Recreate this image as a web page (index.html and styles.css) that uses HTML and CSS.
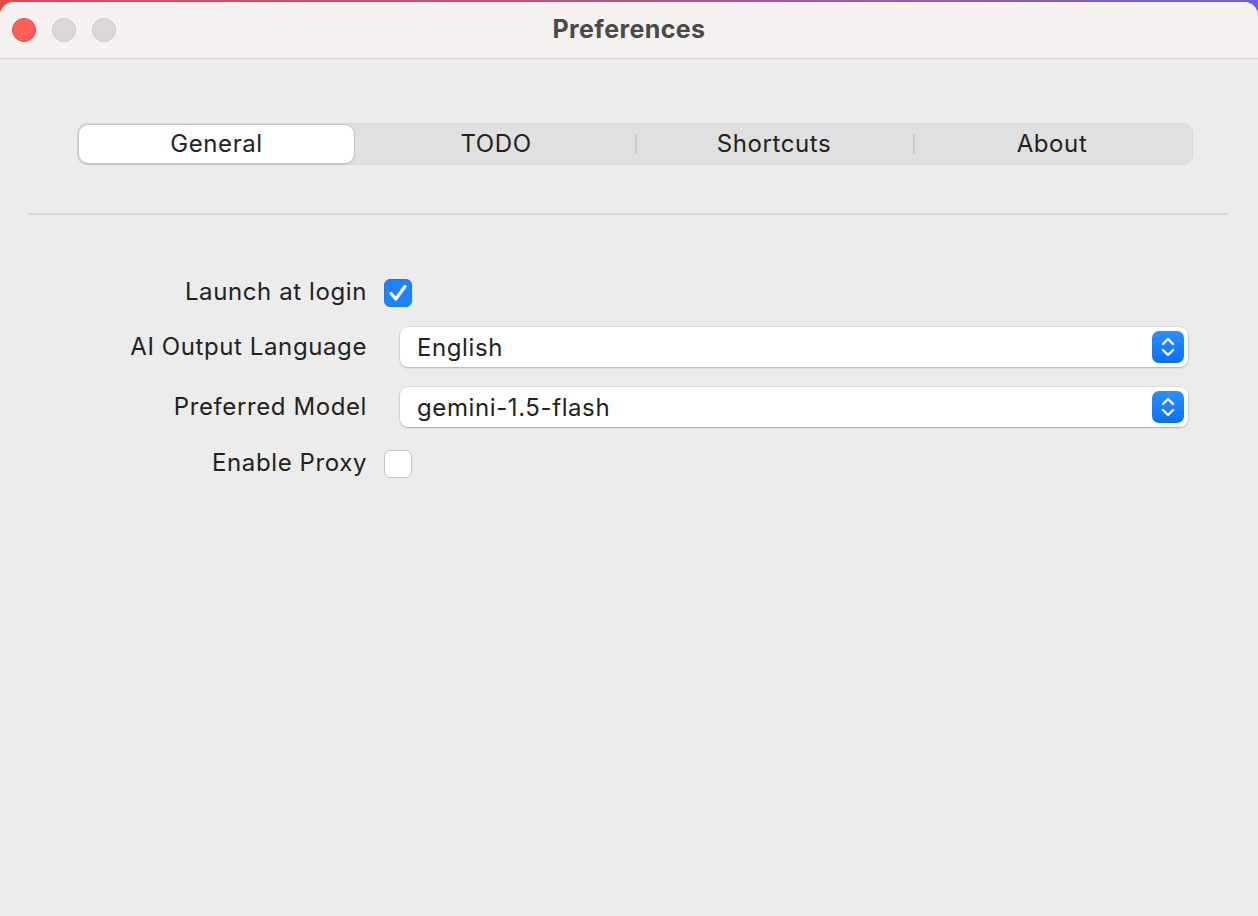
FILE: index.html
```html
<!DOCTYPE html>
<html lang="en">
<head>
    <meta charset="UTF-8">
    <title>Preferences</title>
    <link rel="stylesheet" href="styles.css">
</head>
<body>
    <div class="window">
        <div class="titlebar">
            <div class="lights">
                <span class="light close"></span>
                <span class="light"></span>
                <span class="light"></span>
            </div>
            <div class="title">Preferences</div>
        </div>

        <div class="content">
            <div class="tabs">
                <div class="tab active">General</div>
                <div class="tab">TODO</div>
                <div class="tab sep">Shortcuts</div>
                <div class="tab sep">About</div>
            </div>

            <div class="divider"></div>

            <div class="form">
                <label class="label check-label">Launch at login</label>
                <div class="field">
                    <span class="checkbox checked">
                        <svg width="22" height="22" viewBox="0 0 22 22"><path d="M4 11.5 L8.8 17 L18 4.5" fill="none" stroke="#fff" stroke-width="3.2" stroke-linecap="round" stroke-linejoin="round"/></svg>
                    </span>
                </div>

                <label class="label">AI Output Language</label>
                <div class="field">
                    <div class="select">
                        <span>English</span>
                        <span class="stepper">
                            <svg width="16" height="24" viewBox="0 0 16 24"><path d="M3 9 L8 4 L13 9 M3 15 L8 20 L13 15" fill="none" stroke="#fff" stroke-width="2.4" stroke-linecap="round" stroke-linejoin="round"/></svg>
                        </span>
                    </div>
                </div>

                <label class="label">Preferred Model</label>
                <div class="field">
                    <div class="select">
                        <span>gemini-1.5-flash</span>
                        <span class="stepper">
                            <svg width="16" height="24" viewBox="0 0 16 24"><path d="M3 9 L8 4 L13 9 M3 15 L8 20 L13 15" fill="none" stroke="#fff" stroke-width="2.4" stroke-linecap="round" stroke-linejoin="round"/></svg>
                        </span>
                    </div>
                </div>

                <label class="label check-label proxy">Enable Proxy</label>
                <div class="field proxy">
                    <span class="checkbox"></span>
                </div>
            </div>
        </div>
    </div>
</body>
</html>
```

FILE: styles.css
```css
html, body {
    margin: 0;
    height: 100%;
}

body {
    font-family: 'Inter', 'Liberation Sans', sans-serif;
    background: linear-gradient(to right, #e4464c, #c0528a 50%, #6d5ee8);
    color: #222;
    overflow: hidden;
}

.window {
    margin-top: 2px;
    height: calc(100% - 2px);
    background: #ececec;
    border-radius: 14px 14px 0 0;
    overflow: hidden;
    display: flex;
    flex-direction: column;
}

.titlebar {
    height: 56px;
    background: #f5f1f0;
    border-bottom: 1px solid #cfcccb;
    display: flex;
    align-items: center;
    position: relative;
}

.lights {
    display: flex;
    gap: 16px;
    padding-left: 12px;
}

.light {
    width: 22px;
    height: 22px;
    border-radius: 50%;
    background: #dcd8d7;
    border: 1px solid #c9c5c4;
}

.light.close {
    background: #fe5f57;
    border-color: #e9463f;
}

.title {
    position: absolute;
    left: 0;
    right: 0;
    top: 12px;
    text-align: center;
    font-size: 25px;
    font-weight: 700;
    letter-spacing: 0.4px;
    color: #4a4a4a;
    pointer-events: none;
}

.content {
    flex: 1;
    padding-top: 64px;
}

.tabs {
    margin: 0 65px 0 77px;
    height: 42px;
    background: #e0e0e0;
    border: 1px solid #d8d8d8;
    border-radius: 10px;
    box-sizing: border-box;
    display: flex;
    padding: 1px;
}

.tab {
    flex: 1;
    display: flex;
    align-items: center;
    justify-content: center;
    padding-bottom: 2px;
    font-size: 24px;
    letter-spacing: 0.6px;
    color: #222;
    position: relative;
}

.tab.active {
    flex: 0 0 275px;
    margin-right: 3px;
    background: #fff;
    border-radius: 9px;
    box-shadow: 0 0 0 1px #c4c4c4, 0 1px 2px rgba(0, 0, 0, 0.25);
}

.tab.sep::before {
    content: '';
    position: absolute;
    left: 0;
    top: 9px;
    bottom: 9px;
    width: 2px;
    background: #cbcbcb;
}

.divider {
    height: 2px;
    background: #d6d6d6;
    margin: 48px 30px 0 28px;
}

.form {
    display: grid;
    grid-template-columns: 367px 1fr;
    column-gap: 17px;
    row-gap: 20px;
    padding: 64px 70px 0 0;
    align-items: center;
}

.label {
    text-align: right;
    line-height: 28px;
    font-size: 24px;
    letter-spacing: 0.6px;
    color: #222;
}

.check-label {
    line-height: 25px;
    padding-bottom: 3px;
}

.field {
    display: flex;
    align-items: center;
}

.proxy {
    margin-top: 3px;
}

.checkbox {
    width: 28px;
    height: 28px;
    box-sizing: border-box;
    border-radius: 6px;
    background: #fff;
    border: 1px solid #c6c6c6;
    display: flex;
    align-items: center;
    justify-content: center;
}

.checkbox.checked {
    background: #1e83fb;
    border-color: #1a78ea;
}

.select {
    flex: 1;
    margin-left: 16px;
    height: 40px;
    background: #fff;
    border-radius: 8px;
    box-shadow: 0 0 0 0.5px rgba(0, 0, 0, 0.12), 0 1px 2px rgba(0, 0, 0, 0.2);
    display: flex;
    align-items: center;
    justify-content: space-between;
    padding: 0 4px 0 17px;
    font-size: 24px;
    letter-spacing: 0.6px;
    color: #222;
}

.stepper {
    width: 32px;
    height: 32px;
    border-radius: 7px;
    background: linear-gradient(#2f8fff, #0a6ff6);
    display: flex;
    align-items: center;
    justify-content: center;
}
```
